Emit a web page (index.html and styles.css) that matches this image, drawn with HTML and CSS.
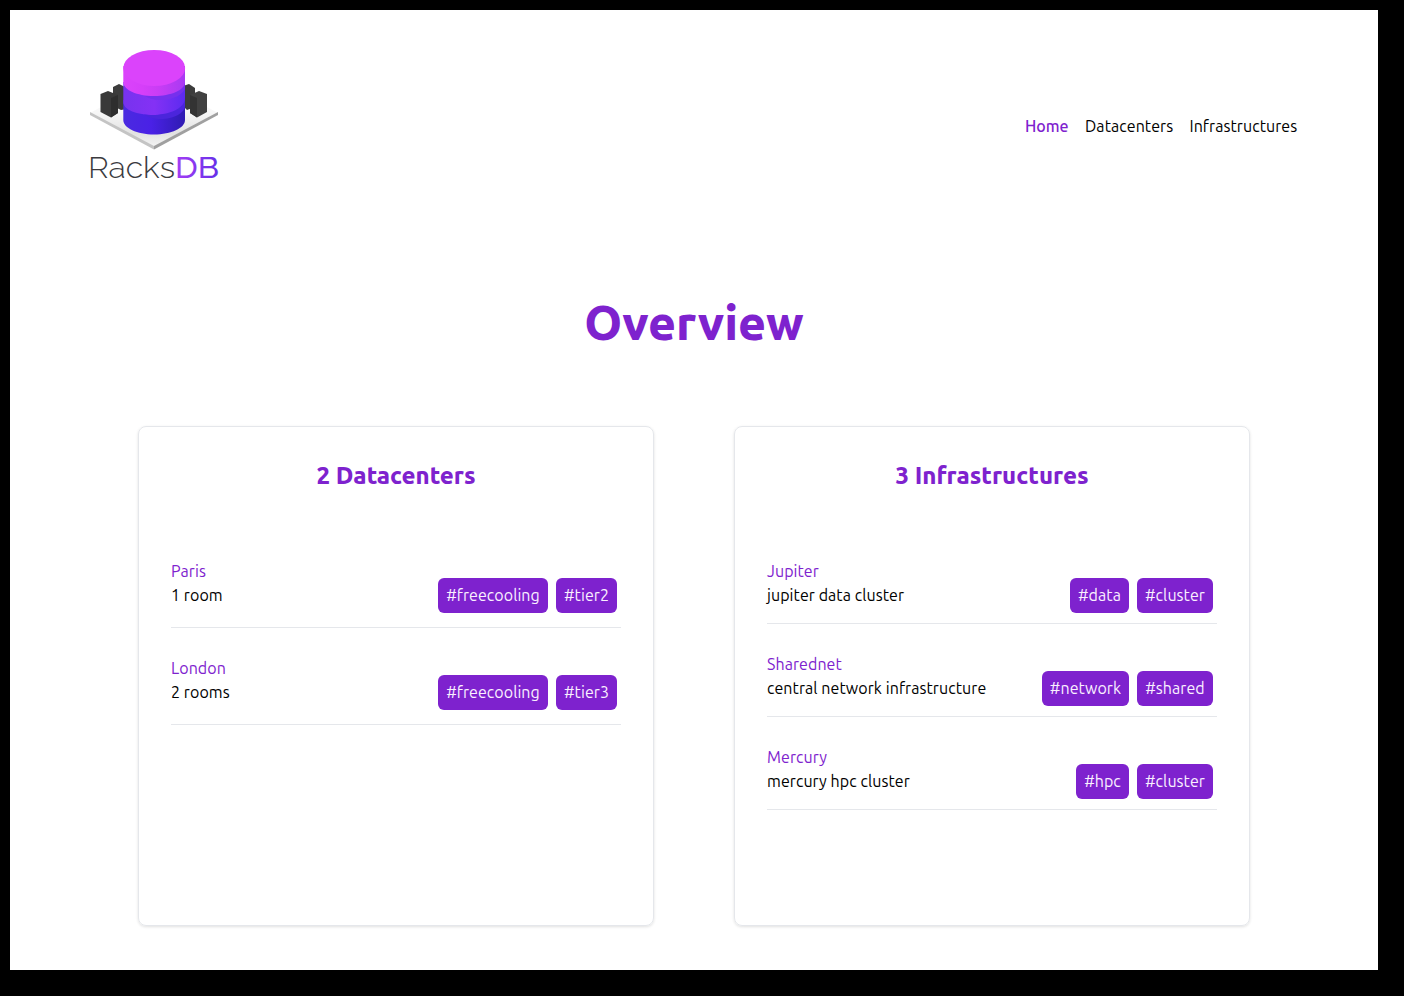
FILE: index.html
```html
<!DOCTYPE html>
<html lang="en">
<head>
<meta charset="utf-8">
<title>RacksDB</title>
<link rel="stylesheet" href="styles.css">
</head>
<body>
<div class="page">
  <header class="header">
    <a class="logo">
      <svg width="150" height="150" viewBox="0 0 150 150" role="img" aria-label="RacksDB">
        <defs>
          <linearGradient id="pinkSide"><stop offset="0" stop-color="#db43fb"/><stop offset=".3" stop-color="#d63ff9"/><stop offset=".55" stop-color="#ca3df5"/><stop offset="1" stop-color="#a83af2"/></linearGradient>
          <linearGradient id="violetSide"><stop offset="0" stop-color="#7733ee"/><stop offset=".5" stop-color="#8431f5"/><stop offset="1" stop-color="#5c2bf0"/></linearGradient>
          <linearGradient id="blueSide"><stop offset="0" stop-color="#4a2ae0"/><stop offset=".45" stop-color="#4a21e6"/><stop offset="1" stop-color="#2f1bb2"/></linearGradient>
          <linearGradient id="dbText"><stop offset="0" stop-color="#a53df5"/><stop offset="1" stop-color="#6530e8"/></linearGradient>
          <linearGradient id="floor" x1="0" y1="0" x2="0" y2="1"><stop offset="0" stop-color="#fff"/><stop offset=".5" stop-color="#f7f7f7"/><stop offset=".8" stop-color="#e2e2e2"/><stop offset="1" stop-color="#f5f5f5"/></linearGradient>
        </defs>
        <path d="M10 73 74 38 138 73 74 107Z" fill="url(#floor)"/>
        <path d="M10 72 74 106V109.500L10 75Z" fill="#c4c4c4"/>
        <path d="M138 72 74 106V109.500L138 75Z" fill="#a0a0a0"/>
        <path d="M33 47 39 44 47 48V69L41 70 33 66Z" fill="#3c3c3c"/>
        <path d="M103 46 109 44 115 48V67L107 70 103 66Z" fill="#3c3c3c"/>
        <path d="M20.500 54 28 51 38 55V73L31 77.500 20.500 72Z" fill="#393939"/>
        <path d="M31 58 38 55V73L31 77.500Z" fill="#2e2e2e"/>
        <path d="M110 55 119 51 127 54V72L117 77.500 110 73Z" fill="#414141"/>
        <path d="M110 55 117 58V77.500L110 73Z" fill="#333"/>
        <path d="M43.300 60V80C43.300 88 57 94.500 74 94.500S105 88 105 80V60Z" fill="url(#blueSide)"/>
        <path d="M43.300 42V62C43.300 70 57 75 74 75S105 70 105 62V42Z" fill="url(#violetSide)"/>
        <path d="M64 74.500C84 77 105 70 105 58V66C105 73 93 79 81 79 73 79 68 77 64 74.500Z" fill="#4b25dc"/>
        <path d="M64 55.500C84 58 105 51 105 40V47C105 54 93 60 80 60 73 60 68 58 64 55.500Z" fill="#7630ed"/>
        <path d="M43.300 26V42C43.300 50 57 56 74 56S105 50 105 42V26Z" fill="url(#pinkSide)"/>
        <ellipse cx="74.200" cy="28" rx="30.900" ry="18" fill="#db43fb"/>
        <text class="logo-racks" x="8" y="138" textLength="87" lengthAdjust="spacingAndGlyphs">Racks</text>
        <text class="logo-db" x="95" y="138" textLength="44" lengthAdjust="spacingAndGlyphs">DB</text>
      </svg>
    </a>
    <nav class="nav">
      <a class="nav-link nav-home">Home</a>
      <a class="nav-link nav-datacenters">Datacenters</a>
      <a class="nav-link nav-infrastructures">Infrastructures</a>
    </nav>
  </header>
  <main>
    <h1 class="title">Overview</h1>
    <div class="cards">
      <section class="card card-roomy">
        <h2 class="card-title">2 Datacenters</h2>
        <div class="item"><div><div class="name">Paris</div><div class="desc">1 room</div></div>
          <div class="tags"><span class="tag tag-freecooling">#freecooling</span><span class="tag tag-tier">#tier2</span></div></div>
        <div class="item"><div><div class="name">London</div><div class="desc">2 rooms</div></div>
          <div class="tags"><span class="tag tag-freecooling">#freecooling</span><span class="tag tag-tier">#tier3</span></div></div>
      </section>
      <section class="card">
        <h2 class="card-title">3 Infrastructures</h2>
        <div class="item"><div><div class="name">Jupiter</div><div class="desc">jupiter data cluster</div></div>
          <div class="tags"><span class="tag tag-data">#data</span><span class="tag tag-cluster">#cluster</span></div></div>
        <div class="item"><div><div class="name">Sharednet</div><div class="desc">central network infrastructure</div></div>
          <div class="tags"><span class="tag tag-network">#network</span><span class="tag tag-cluster">#shared</span></div></div>
        <div class="item"><div><div class="name">Mercury</div><div class="desc">mercury hpc cluster</div></div>
          <div class="tags"><span class="tag tag-hpc">#hpc</span><span class="tag tag-cluster">#cluster</span></div></div>
      </section>
    </div>
  </main>
</div>
</body>
</html>
```
FILE: styles.css
```css
* { box-sizing: border-box; }
body { margin: 0; padding: 10px 26px 26px 10px; background: #000; color: #000; font: 420 16px/24px Ubuntu, "Noto Sans", sans-serif; letter-spacing: .07px; }
.page { height: 960px; background: #fff; }
.header { display: flex; justify-content: space-between; align-items: flex-start; height: 230px; padding: 30px 80px 0 70px; }
.logo, .logo svg { display: block; }
.logo-racks { font: 300 30px Raleway, Lato, sans-serif; fill: #3b3b3f; letter-spacing: 0; }
.logo-db { font: 500 30px Raleway, Lato, sans-serif; fill: url(#dbText); letter-spacing: 0; }
.nav { display: flex; gap: 16px; padding-top: 74px; }
.nav-link { white-space: nowrap; }
.nav-home { width: 44px; color: #7e22ce; font-weight: 550; letter-spacing: 0; }
.nav-datacenters { width: 88.500px; }
.nav-infrastructures { width: 108.500px; }
.title { margin: 0; padding-top: 58px; text-align: center; color: #7e22ce; font-size: 48px; line-height: 48px; font-weight: 800; letter-spacing: 0; }
.cards { display: flex; justify-content: center; gap: 80px; padding-top: 80px; }
.card { width: 516px; height: 500px; padding: 33px 32px 32px; border: 1px solid #e5e7eb; border-radius: 8px; box-shadow: 0 1px 3px rgba(0,0,0,.12); }
.card-title { margin: 0 0 67px; text-align: center; color: #7e22ce; font-size: 24px; line-height: 32px; font-weight: 800; letter-spacing: 0; }
.item { display: flex; justify-content: space-between; align-items: flex-start; padding-bottom: 10px; margin-bottom: 28px; border-bottom: 1px solid #e5e7eb; }
.card-roomy .item { padding-bottom: 14px; }
.name { color: #7e22ce; }
.tags { display: flex; gap: 8px; padding: 19px 4px 0 0; }
.tag { height: 35px; border-radius: 6px; background: #7e22ce; color: #faf0ff; text-align: center; line-height: 34px; white-space: nowrap; }
.tag-freecooling { width: 110px; }
.tag-tier { width: 61px; }
.tag-data { width: 59px; }
.tag-cluster { width: 76px; }
.tag-network { width: 87px; }
.tag-hpc { width: 53px; }
```
